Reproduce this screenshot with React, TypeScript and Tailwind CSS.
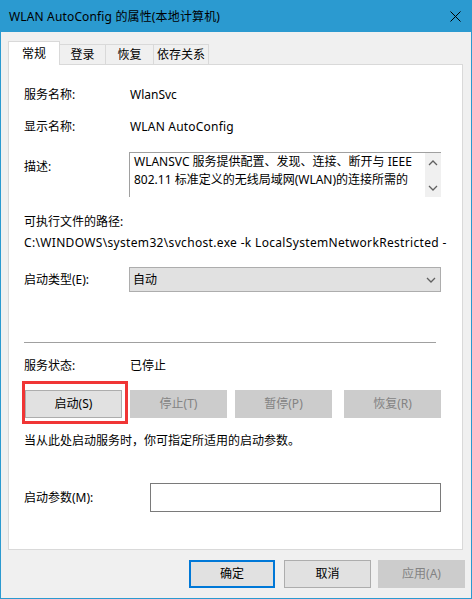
import React from "react";

function Chevron({ up = false }: { up?: boolean }) {
  return (
    <svg width="10" height="6" viewBox="0 0 10 6">
      {up ? (
        <polyline points="1,5 5,1 9,5" fill="none" stroke="#606060" strokeWidth="1.3" />
      ) : (
        <polyline points="1,1 5,5 9,1" fill="none" stroke="#606060" strokeWidth="1.3" />
      )}
    </svg>
  );
}

function Btn({ label, disabled = false, extra = "" }: { label: string; disabled?: boolean; extra?: string }) {
  return (
    <div
      className={`w-[97px] h-[28px] flex items-center justify-center border ${
        disabled ? "bg-[#cccccc] border-[#cccccc] text-[#838383]" : "bg-[#e1e1e1] border-[#adadad] text-black"
      } ${extra}`}
    >
      {label}
    </div>
  );
}

export default function App() {
  return (
    <div className="w-[472px] h-[599px] border border-[#2b9ad0] bg-[#f0f0f0] flex flex-col text-[12px] text-black font-['Noto_Sans','Noto_Sans_CJK_SC',sans-serif]">
      {/* Title bar */}
      <div className="h-[31px] bg-[#2b9ad0] flex items-center justify-between pl-[8px] pr-[10px] shrink-0">
        <span className="text-[12px] leading-none tracking-[0.15px]">WLAN AutoConfig 的属性(本地计算机)</span>
        <svg width="11" height="11" viewBox="0 0 11 11">
          <line x1="0.5" y1="0.5" x2="10.5" y2="10.5" stroke="#000" strokeWidth="1" />
          <line x1="10.5" y1="0.5" x2="0.5" y2="10.5" stroke="#000" strokeWidth="1" />
        </svg>
      </div>

      {/* Tabs */}
      <div className="ml-[7px] mt-[9px] h-[23px] flex items-end">
        <div className="relative z-10 w-[52px] h-[24px] -mb-px bg-white border border-b-0 border-[#d9d9d9] flex items-center justify-center">
          常规
        </div>
        <div className="w-[46px] h-[20px] border-t border-r border-[#d9d9d9] flex items-center justify-center">登录</div>
        <div className="w-[48px] h-[20px] border-t border-r border-[#d9d9d9] flex items-center justify-center">恢复</div>
        <div className="w-[55px] h-[20px] border-t border-r border-[#d9d9d9] flex items-center justify-center">依存关系</div>
      </div>

      {/* Panel */}
      <div className="ml-[7px] w-[455px] h-[486px] bg-white border border-[#d9d9d9] pl-[15px] flex flex-col">
        <div className="mt-[20px] h-[20px] flex items-center">
          <div className="w-[105px]">服务名称:</div>
          <div className="pl-[1px]">WlanSvc</div>
        </div>
        <div className="mt-[12px] h-[20px] flex items-center">
          <div className="w-[105px]">显示名称:</div>
          <div className="pl-[1px] tracking-[0.2px]">WLAN AutoConfig</div>
        </div>
        <div className="mt-[15px] h-[45px] flex items-start">
          <div className="w-[105px] mt-[5px] h-[20px] flex items-center">描述:</div>
          <div className="w-[312px] h-[45px] border-t border-l border-[#a0a0a0] flex">
            <div className="flex-1 pl-[4px] leading-[18px] whitespace-nowrap overflow-hidden">
              <div>WLANSVC 服务提供配置、发现、连接、断开与 IEEE</div>
              <div>802.11 标准定义的无线局域网(WLAN)的连接所需的</div>
            </div>
            <div className="w-[16px] shrink-0 bg-[#f0f0f0] flex flex-col items-center justify-between pt-[7px] pb-[6px]">
              <Chevron up />
              <Chevron />
            </div>
          </div>
        </div>
        <div className="mt-[15px] h-[20px] flex items-center">可执行文件的路径:</div>
        <div className="mt-[1px] h-[20px] flex items-center whitespace-nowrap tracking-[0.33px]">
          C:\WINDOWS\system32\svchost.exe -k LocalSystemNetworkRestricted -
        </div>
        <div className="mt-[14px] h-[25px] flex items-center">
          <div className="w-[105px]">启动类型(E):</div>
          <div className="w-[312px] h-[25px] bg-[#e1e1e1] border border-[#adadad] flex items-center justify-between pl-[3px] pr-[4px]">
            <span>自动</span>
            <Chevron />
          </div>
        </div>
        <div className="mt-[50px] w-[412px] h-px bg-[#a0a0a0]" />
        <div className="mt-[13px] h-[20px] flex items-center">
          <div className="w-[105px]">服务状态:</div>
          <div className="pl-[1px]">已停止</div>
        </div>
        <div className="mt-[14px] flex">
          <div className="relative ml-[1px]">
            <Btn label="启动(S)" />
            <div className="absolute left-[-3px] top-[-9px] w-[106px] h-[43px] border-[3px] border-[#f03535]" />
          </div>
          <Btn label="停止(T)" disabled extra="ml-[8px]" />
          <Btn label="暂停(P)" disabled extra="ml-[8px]" />
          <Btn label="恢复(R)" disabled extra="ml-[12px]" />
        </div>
        <div className="mt-[13px] h-[20px] flex items-center">当从此处启动服务时，你可指定所适用的启动参数。</div>
        <div className="mt-[32px] h-[29px] flex items-center">
          <div className="w-[126px]">启动参数(M):</div>
          <div className="w-[291px] h-[29px] border border-[#7a7a7a] bg-white" />
        </div>
      </div>

      {/* Bottom buttons */}
      <div className="mt-[10px] flex justify-end pr-[6px]">
        <div className="w-[86px] h-[28px] flex items-center justify-center border-2 border-[#0078d7] bg-[#e1e1e1]">确定</div>
        <div className="ml-[9px] w-[87px] h-[28px] flex items-center justify-center border border-[#adadad] bg-[#e1e1e1]">取消</div>
        <div className="ml-[7px] w-[87px] h-[28px] flex items-center justify-center border border-[#cccccc] bg-[#cccccc] text-[#838383]">应用(A)</div>
      </div>
    </div>
  );
}
